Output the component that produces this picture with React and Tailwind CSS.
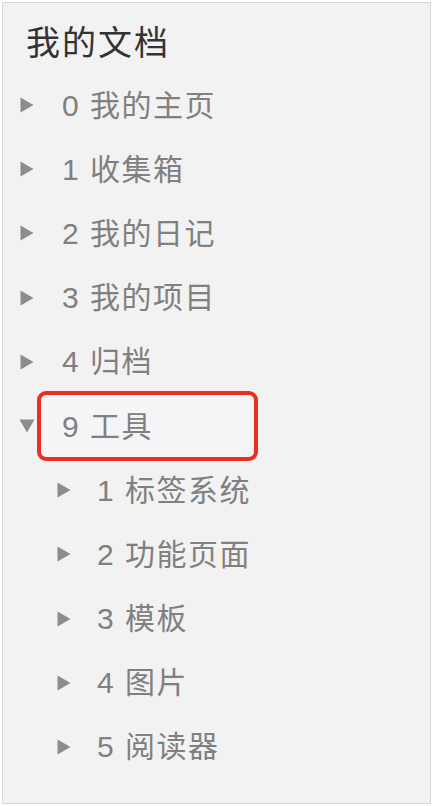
const items = [
  { label: "0 我的主页" },
  { label: "1 收集箱" },
  { label: "2 我的日记" },
  { label: "3 我的项目" },
  { label: "4 归档" },
  {
    label: "9 工具",
    open: true,
    children: ["1 标签系统", "2 功能页面", "3 模板", "4 图片", "5 阅读器"],
  },
];

function Caret({ open }) {
  return (
    <span className="flex w-[16px] shrink-0 justify-center">
      {open ? (
        <svg width="16" height="14" viewBox="0 0 16 14">
          <path d="M0.5 0.5 L15.5 0.5 L8 13.5 Z" fill="#8c8c8c" />
        </svg>
      ) : (
        <svg width="14" height="16" viewBox="0 0 14 16">
          <path d="M0.5 0.5 L13.5 8 L0.5 15.5 Z" fill="#8c8c8c" />
        </svg>
      )}
    </span>
  );
}

function Row({ label, open, depth = 0, highlight }) {
  return (
    <div
      className={
        "flex h-[64.2px] items-center " + (depth ? "pl-[53px]" : "pl-[16px]")
      }
    >
      <Caret open={open} />
      {highlight ? (
        <div className="ml-[2px] flex h-[70px] w-[221px] items-center rounded-[9px] border-[4px] border-[#ec2d22] bg-[#f5f4f7] pl-[21px]">
          <span className="tracking-[1.5px]">{label}</span>
        </div>
      ) : (
        <span
          className={"tracking-[1.5px] " + (depth ? "ml-[25px]" : "ml-[27px]")}
        >
          {label}
        </span>
      )}
    </div>
  );
}

export default function App() {
  return (
    <div className="h-[806px] w-[433px] bg-white p-[2px]">
      <div
        className="h-full w-full border border-[#d6d6d6] bg-[#f2f2f2] text-[30px] text-[#808080]"
        style={{ fontFamily: '"Liberation Sans", "Noto Sans CJK SC", sans-serif' }}
      >
        <h1 className="flex h-[70px] items-center pl-[23px] pt-[10px] text-[34px] tracking-[2px] text-[#333333]">
          我的文档
        </h1>
        {items.map((item) => (
          <div key={item.label}>
            <Row label={item.label} open={item.open} highlight={item.open} />
            {item.children?.map((c) => (
              <Row key={c} label={c} depth={1} />
            ))}
          </div>
        ))}
      </div>
    </div>
  );
}
